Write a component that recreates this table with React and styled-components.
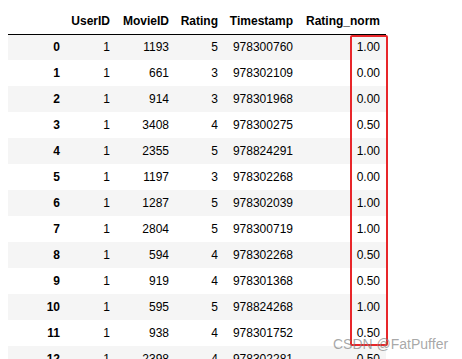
import React from 'react'
import styled, { createGlobalStyle } from 'styled-components'

const GlobalStyle = createGlobalStyle`
    html, body {
        margin: 0;
        padding: 0;
        background: #ffffff;
        overflow: hidden;
    }
`;

const Page = styled.div`
    position: relative;
    width: 462px;
    height: 359px;
    padding: 8px 0 0 8px;
    box-sizing: border-box;
    font-family: "Liberation Sans", Arial, sans-serif;
    font-size: 12px;
    color: #000000;
`;

const Table = styled.table`
    border-collapse: collapse;
    border-spacing: 0;
    table-layout: fixed;
    width: 378px;
`;

const HeadRow = styled.tr`
    height: 26px;
    border-bottom: 1px solid #000000;
`;

const Th = styled.th`
    font-weight: bold;
    text-align: right;
    padding: 0 6px 0 0;
    vertical-align: middle;
    white-space: nowrap;
    width: ${props => props.w - 6}px;
`;

const Row = styled.tr`
    height: 26px;
    background: ${props => props.odd ? '#ffffff' : '#f5f5f5'};
`;

const Td = styled.td`
    text-align: right;
    padding: 0 6px 0 0;
    vertical-align: middle;
    font-weight: ${props => props.index ? 'bold' : 'normal'};
    white-space: nowrap;
`;

const Highlight = styled.div`
    position: absolute;
    left: 350px;
    top: 35px;
    width: 38px;
    height: 311px;
    border: 2px solid #e8262a;
    border-radius: 2px;
    box-sizing: border-box;
`;

const Watermark = styled.div`
    position: absolute;
    left: 333px;
    top: 336px;
    font-family: "Liberation Sans", Arial, sans-serif;
    font-size: 14px;
    color: rgba(130, 130, 130, 0.7);
    white-space: nowrap;
`;

const columns = [
    { label: '', w: 58 },
    { label: 'UserID', w: 50 },
    { label: 'MovieID', w: 59 },
    { label: 'Rating', w: 49 },
    { label: 'Timestamp', w: 75 },
    { label: 'Rating_norm', w: 87 },
]

const rows = [
    [1, 1193, 5, 978300760, '1.00'],
    [1, 661, 3, 978302109, '0.00'],
    [1, 914, 3, 978301968, '0.00'],
    [1, 3408, 4, 978300275, '0.50'],
    [1, 2355, 5, 978824291, '1.00'],
    [1, 1197, 3, 978302268, '0.00'],
    [1, 1287, 5, 978302039, '1.00'],
    [1, 2804, 5, 978300719, '1.00'],
    [1, 594, 4, 978302268, '0.50'],
    [1, 919, 4, 978301368, '0.50'],
    [1, 595, 5, 978824268, '1.00'],
    [1, 938, 4, 978301752, '0.50'],
    [1, 2398, 4, 978302281, '0.50'],
]

const App = () => {
    return(
        <Page>
            <GlobalStyle />
            <Table>
                <thead>
                    <HeadRow>
                        {columns.map((c, i) => <Th key={i} w={c.w}>{c.label}</Th>)}
                    </HeadRow>
                </thead>
                <tbody>
                    {rows.map((r, i) => (
                        <Row key={i} odd={i % 2 === 1}>
                            <Td index>{i}</Td>
                            {r.map((v, j) => <Td key={j}>{v}</Td>)}
                        </Row>
                    ))}
                </tbody>
            </Table>
            <Highlight />
            <Watermark>CSDN @FatPuffer</Watermark>
        </Page>
    )
}

export default App
